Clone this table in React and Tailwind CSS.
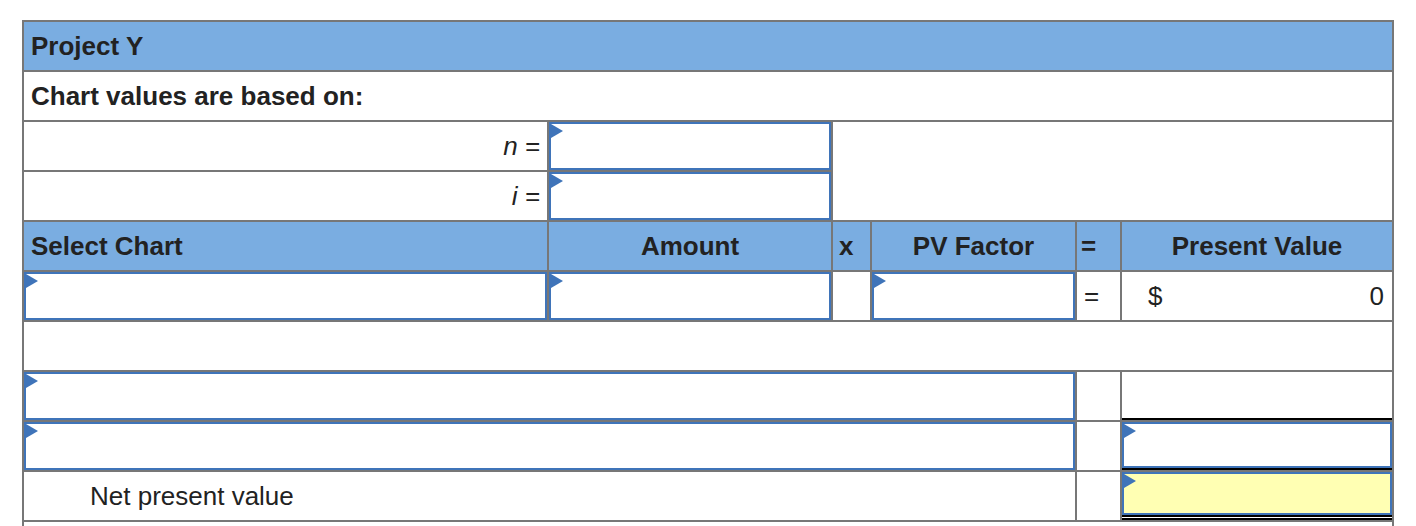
function InputBox({ yellow, className = "" }) {
    return (
        <div
            className={`relative h-full w-full border-2 border-[#3f74b9] ${
                yellow ? "bg-[#ffffb3]" : "bg-white"
            } ${className}`}
        >
            <span className="absolute left-0 top-0 h-0 w-0 border-l-[12px] border-y-[7px] border-l-[#3f74b9] border-y-transparent" />
        </div>
    );
}

function App() {
    const cell = "bg-white flex items-center";
    const head =
        "bg-[#7aade1] flex items-center font-bold";

    return (
        <div
            className="min-h-screen bg-white pt-[20px] pl-[22px] text-[26px] text-[#222]"
            style={{ fontFamily: '"Liberation Sans", Arial, sans-serif' }}
        >
            <div className="grid w-[1372px] grid-cols-[523px_282px_37px_203px_43px_270px] auto-rows-[48px] gap-[2px] bg-[#777] p-[2px]">
                {/* title */}
                <div className={`${head} col-span-6 px-[7px]`}>
                    Project Y
                </div>

                <div className={`${cell} col-span-6 px-[7px] font-bold`}>
                    Chart values are based on:
                </div>

                {/* n and i */}
                <div className={`${cell} justify-end pr-[7px] italic`}>
                    n =
                </div>
                <div className="bg-white">
                    <InputBox />
                </div>
                <div className="col-span-4 row-span-2 bg-white" />

                <div className={`${cell} justify-end pr-[7px] italic`}>
                    i =
                </div>
                <div className="bg-white">
                    <InputBox />
                </div>

                {/* table header */}
                <div className={`${head} px-[7px]`}>
                    Select Chart
                </div>
                <div className={`${head} justify-center`}>
                    Amount
                </div>
                <div className={`${head} px-[6px]`}>x</div>
                <div className={`${head} justify-center`}>
                    PV Factor
                </div>
                <div className={`${head} px-[4px]`}>=</div>
                <div className={`${head} justify-center`}>
                    Present Value
                </div>

                {/* data row */}
                <div className="bg-white">
                    <InputBox />
                </div>
                <div className="bg-white">
                    <InputBox />
                </div>
                <div className="bg-white" />
                <div className="bg-white">
                    <InputBox />
                </div>
                <div className={`${cell} px-[7px]`}>=</div>
                <div className={`${cell} justify-between pl-[26px] pr-[8px]`}>
                    <span>$</span>
                    <span>0</span>
                </div>

                {/* blank row */}
                <div className="col-span-6 bg-white" />

                {/* totals */}
                <div className="col-span-4 bg-white">
                    <InputBox />
                </div>
                <div className="bg-white" />
                <div className="border-b-2 border-black bg-white" />

                <div className="col-span-4 bg-white">
                    <InputBox />
                </div>
                <div className="bg-white" />
                <div className="border-b-2 border-black bg-white">
                    <InputBox />
                </div>

                <div className={`${cell} col-span-4 pl-[66px]`}>
                    Net present value
                </div>
                <div className="bg-white" />
                <div className="flex flex-col bg-white">
                    <div className="flex-1">
                        <InputBox yellow />
                    </div>
                    <div className="h-[5px] border-y-2 border-black bg-white" />
                </div>

                <div className="col-span-6 bg-white" />
            </div>
        </div>
    );
}

export default App;
